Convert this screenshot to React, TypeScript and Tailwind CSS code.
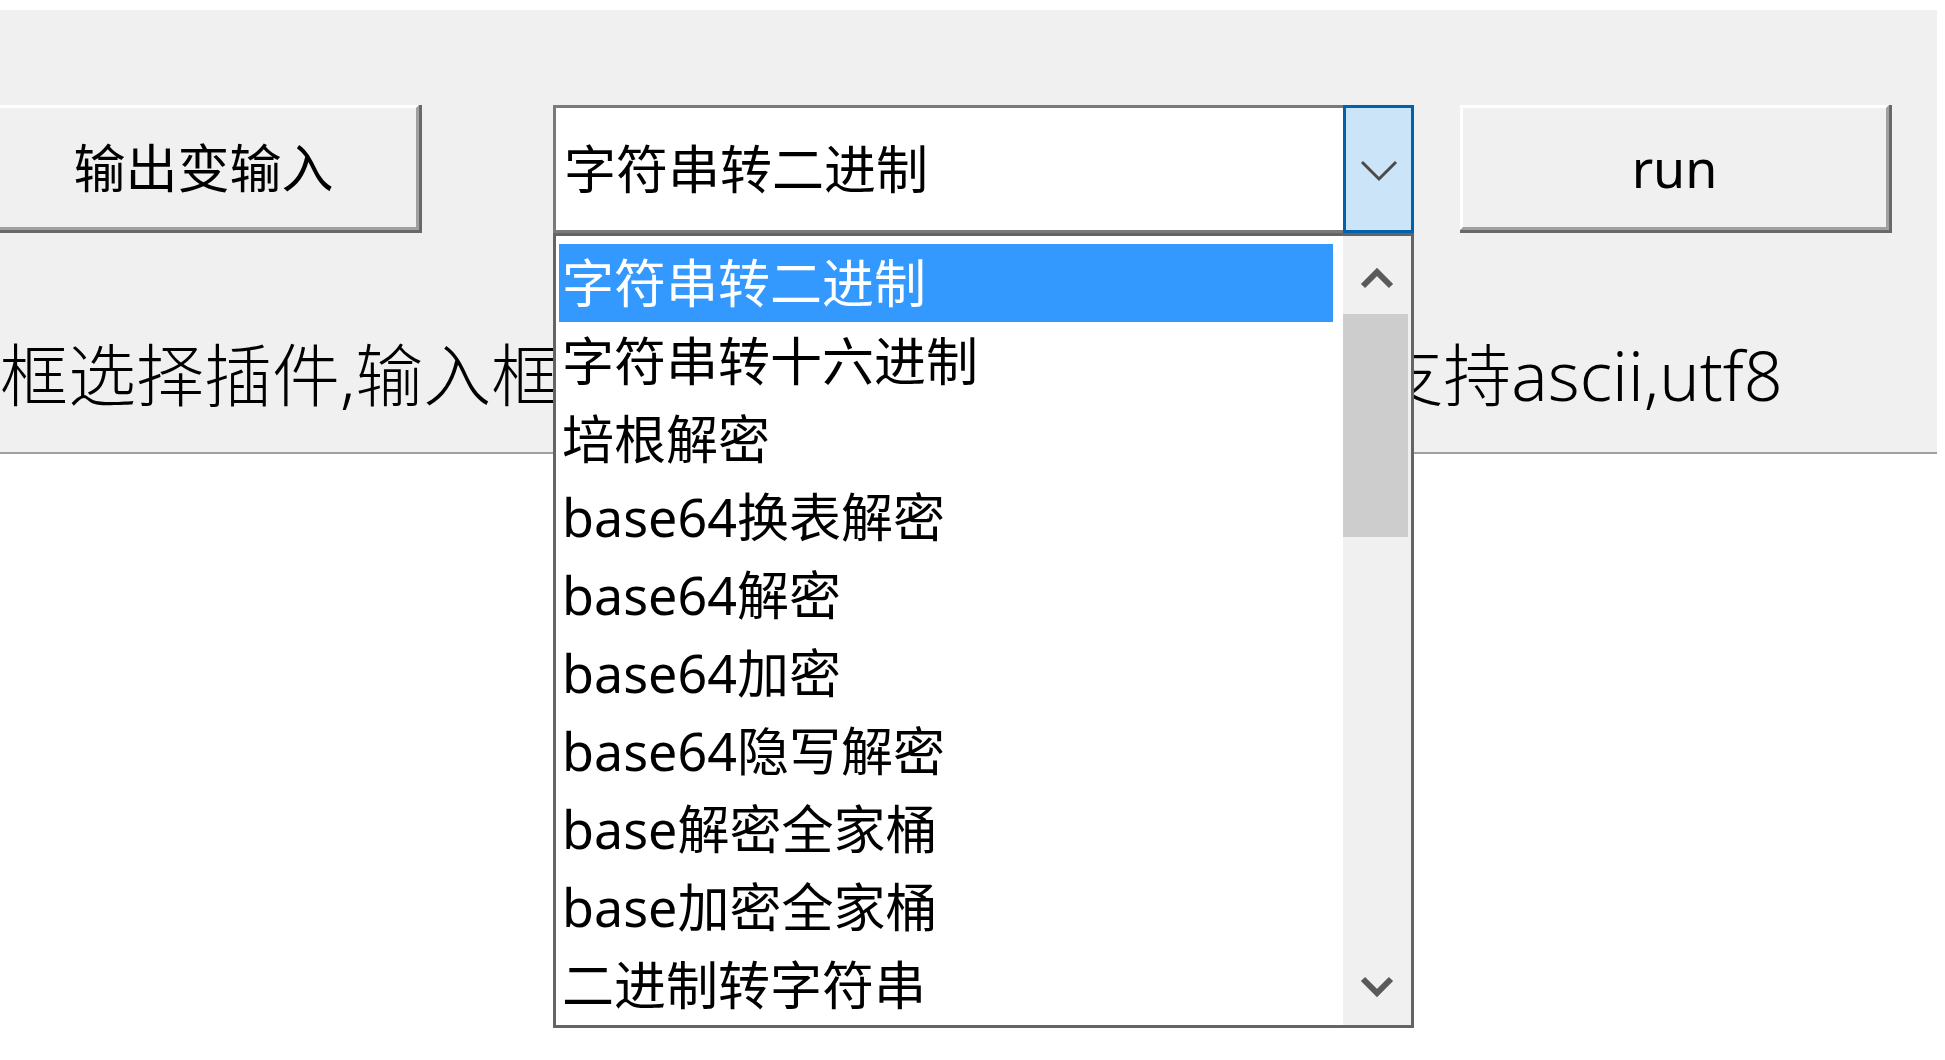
const items = [
  "字符串转二进制",
  "字符串转十六进制",
  "培根解密",
  "base64换表解密",
  "base64解密",
  "base64加密",
  "base64隐写解密",
  "base解密全家桶",
  "base加密全家桶",
  "二进制转字符串",
];

const font = "font-['Noto_Sans','Noto_Sans_CJK_SC',sans-serif]";

function ClassicButton({ label, className }: { label: string; className: string }) {
  // win32 style raised button: white top/left, two grey steps bottom/right
  return (
    <div className={`h-[128px] border-r-[3px] border-b-[3px] border-[#696969] ${className}`}>
      <div className="flex h-full w-full items-center justify-center border-t-[3px] border-l-[3px] border-r-[3px] border-b-[3px] border-t-white border-l-white border-r-[#a0a0a0] border-b-[#a0a0a0] bg-[#f0f0f0]">
        <span className="text-[52px] leading-none text-black">{label}</span>
      </div>
    </div>
  );
}

function ScrollChevron({ up }: { up?: boolean }) {
  return (
    <svg width="36" height="24" viewBox="0 0 36 24">
      <polyline
        points={up ? "4,20 18,6 32,20" : "4,5 18,19 32,5"}
        fill="none"
        stroke="#5a5a5a"
        strokeWidth={6}
      />
    </svg>
  );
}

function ComboBox() {
  return (
    <div className="relative ml-[131px] w-[861px]">
      <div className="flex h-[128px] bg-white">
        <div className="flex flex-1 items-center border-y-[3px] border-l-[3px] border-[#7a7a7a] pl-[8px]">
          <span className="text-[52px] leading-none text-black">{items[0]}</span>
        </div>
        <div className="flex w-[71px] items-center justify-center border-[3px] border-[#0062ad] bg-[#cce4f7] pt-[4px]">
          <svg width="40" height="26" viewBox="0 0 40 26">
            <polyline points="3,4 20,21 37,4" fill="none" stroke="#4a4a4a" strokeWidth={3} />
          </svg>
        </div>
      </div>

      <div className="absolute top-full left-0 z-10 flex h-[795px] w-[861px] border-[3px] border-[#646464] bg-white">
        <div className="flex flex-1 flex-col pt-[8px] pl-[3px] pr-[10px]">
          {items.map((it, i) => (
            <div
              key={it}
              className={`flex h-[78px] items-center pl-[3px] text-[52px] leading-none ${
                i === 0 ? "bg-[#3399ff] text-white" : "text-black"
              }`}
            >
              {it}
            </div>
          ))}
        </div>
        <div className="flex w-[68px] flex-col bg-[#f0f0f0]">
          <div className="flex h-[78px] items-center justify-center pt-[6px]">
            <ScrollChevron up />
          </div>
          <div className="mr-[3px] h-[223px] bg-[#cdcdcd]" />
          <div className="flex-1" />
          <div className="flex h-[78px] items-center justify-center">
            <ScrollChevron />
          </div>
        </div>
      </div>
    </div>
  );
}

export default function App() {
  return (
    <div className={`h-[1060px] w-[1945px] overflow-hidden bg-white ${font}`}>
      <div className="mt-[10px] h-[444px] w-[1937px] border-b-2 border-[#a0a0a0] bg-[#f0f0f0]">
        <div className="flex items-start pt-[95px]">
          <ClassicButton label="输出变输入" className="-ml-[12px] w-[434px]" />
          <ComboBox />
          <ClassicButton label="run" className="ml-[46px] w-[432px]" />
        </div>
        <p className="mt-[96px] whitespace-nowrap text-[68px] leading-[92px] font-light text-black">
          框选择插件,输入框中填写需要处理的内容编码支持ascii,utf8
        </p>
      </div>
    </div>
  );
}
